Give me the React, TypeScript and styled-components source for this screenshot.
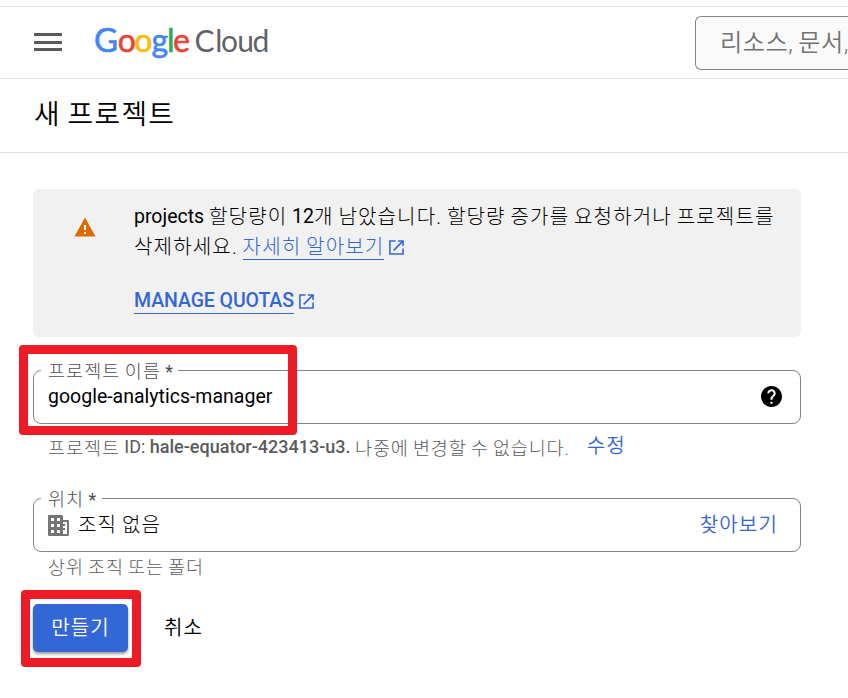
import React from "react";
import styled, { createGlobalStyle } from "styled-components";

const GlobalStyle = createGlobalStyle`
  *, *::before, *::after { box-sizing: border-box; }
  html, body { margin: 0; padding: 0; background: #fff; overflow: hidden; }
  body { font-family: Roboto, "Noto Sans CJK KR", sans-serif; color: #000; }
`;

const Ko = styled.span<{ $weight?: number; $track?: number }>`
  font-weight: ${(p) => p.$weight ?? 300};
  font-size: 1.03em;
  letter-spacing: ${(p) => p.$track ?? 0.055}em;
  word-spacing: -0.06em;
`;

const Page = styled.div`
  width: 848px;
  height: 698px;
  padding-top: 6px;
  display: flex;
  flex-direction: column;
  overflow: hidden;
`;

const TopBar = styled.header`
  height: 73px;
  flex: none;
  display: flex;
  align-items: center;
  padding-left: 34px;
  border-top: 1px solid #dfe0e1;
  border-bottom: 1px solid #dfe0e1;
`;

const MenuButton = styled.button`
  flex: none;
  width: 28px;
  height: 18px;
  margin-top: -1px;
  padding: 0;
  border: 0;
  background: none;
  display: flex;
  flex-direction: column;
  justify-content: space-between;
`;

const MenuLine = styled.span`
  width: 28px;
  height: 3px;
  background: #5a5b5d;
`;

const Logo = styled.svg`
  flex: none;
  width: 180px;
  height: 50px;
  margin-left: 32px;
  font-family: Lato, sans-serif;
`;

const Search = styled.div`
  flex: none;
  width: 174px;
  height: 54px;
  margin-left: 421px;
  padding: 0 0 5px 24px;
  display: flex;
  align-items: center;
  border: 1px solid #80868b;
  border-right: 0;
  border-radius: 6px 0 0 6px;
  background: #fafafa;
  color: #737373;
  font-size: 23.5px;
  white-space: nowrap;
`;

const TitleBar = styled.div`
  height: 74px;
  flex: none;
  padding: 0 34px 1px;
  display: flex;
  align-items: center;
  border-bottom: 1px solid #dfe0e1;
`;

const Title = styled.h1`
  margin: 0;
  font-size: 27px;
  font-weight: 400;
  line-height: 36px;
  white-space: nowrap;
`;

const Form = styled.main`
  width: 768px;
  margin: 36px 0 0 33px;
  display: flex;
  flex-direction: column;
`;

const Notice = styled.section`
  height: 148px;
  display: flex;
  padding: 13px 0 0 41px;
  border-radius: 6px;
  background: #f1f1f1;
`;

const WarningIcon = styled.svg`
  flex: none;
  width: 22px;
  height: 20px;
  margin: 15px 38px 0 0;
`;

const NoticeText = styled.div`
  font-size: 19.5px;
  line-height: 30px;
  white-space: nowrap;
`;

const Line = styled.div<{ $gap?: number }>`
  height: 30px;
  margin-top: ${(p) => p.$gap ?? 0}px;
  display: flex;
  align-items: center;
  white-space: pre;
`;

const Link = styled.a<{ $bold?: boolean }>`
  height: 25px;
  line-height: 24px;
  margin-right: 5px;
  color: #3367d6;
  border-bottom: 1px solid #3367d6;
  font-weight: ${(p) => (p.$bold ? 500 : 400)};
  letter-spacing: ${(p) => (p.$bold ? -0.08 : 0)}px;
`;

const Field = styled.div<{ $right?: number }>`
  position: relative;
  height: 54px;
  display: flex;
  align-items: center;
  justify-content: space-between;
  padding: 0 ${(p) => p.$right ?? 18}px 0 14px;
  border: 1px solid #80868b;
  border-radius: 8px;
`;

const FieldLabel = styled.label<{ $width: number }>`
  position: absolute;
  left: 7px;
  top: -12px;
  width: ${(p) => p.$width}px;
  height: 24px;
  padding-left: 7px;
  line-height: 25px;
  font-size: 18px;
  color: #4d4e50;
  background: #fff;
  white-space: nowrap;
`;

const Value = styled.div`
  display: flex;
  align-items: center;
  gap: 9px;
  font-size: 19.5px;
  line-height: 28px;
`;

const Hint = styled.div<{ $top?: number }>`
  height: 30px;
  margin-top: ${(p) => p.$top ?? 0}px;
  padding-left: 15px;
  display: flex;
  align-items: center;
  font-size: 18px;
  color: #5a5b5d;
  white-space: pre;

  b { font-weight: 500; }
`;

const TextButton = styled.button<{ $color: string; $left?: number }>`
  padding: 0;
  margin-left: ${(p) => p.$left ?? 0}px;
  border: 0;
  background: none;
  font-family: inherit;
  font-size: 19.5px;
  line-height: 28px;
  color: ${(p) => p.$color};
`;

const Spacer = styled.div<{ $h: number }>`
  flex: none;
  height: ${(p) => p.$h}px;
`;

const Actions = styled.div`
  display: flex;
  align-items: center;
  height: 48px;
`;

const CreateButton = styled.button`
  width: 95px;
  height: 48px;
  padding: 0 0 3px;
  border: 0;
  border-radius: 5px;
  background: #3367d6;
  color: #fff;
  font-family: inherit;
  font-size: 19.5px;
  box-shadow: 0 2px 3px rgba(0, 0, 0, 0.4);
`;

const Highlight = styled.div<{ $x: number; $y: number; $w: number; $h: number }>`
  position: absolute;
  left: ${(p) => p.$x}px;
  top: ${(p) => p.$y}px;
  width: ${(p) => p.$w}px;
  height: ${(p) => p.$h}px;
  border: 9px solid #ed1c24;
  border-radius: 4px;
  pointer-events: none;
`;

const OpenIconSvg = styled.svg`
  width: 15px;
  height: 15px;
  margin-top: 1px;
`;

const OpenIcon = () => (
  <OpenIconSvg viewBox="0 0 16 16" fill="none" stroke="#3367d6" strokeWidth="1.7">
    <path d="M7 1H1v14h14V9M9.5 1H15v5.5M15 1L5 11" />
  </OpenIconSvg>
);

const HelpSvg = styled.svg`
  width: 21px;
  height: 21px;
  margin-bottom: 1px;
`;

const HelpIcon = () => (
  <HelpSvg viewBox="2 2 20 20" fill="#000">
    <path d="M12 2C6.48 2 2 6.48 2 12s4.48 10 10 10 10-4.48 10-10S17.52 2 12 2zm1 17h-2v-2h2v2zm2.07-7.75l-.9.92C13.45 12.9 13 13.5 13 15h-2v-.5c0-1.1.45-2.1 1.17-2.83l1.24-1.26c.37-.36.59-.86.59-1.41 0-1.1-.9-2-2-2s-2 .9-2 2H8c0-2.21 1.79-4 4-4s4 1.79 4 4c0 .88-.36 1.68-.93 2.25z" />
  </HelpSvg>
);

const BuildingIcon = () => (
  <svg width="21" height="21" viewBox="0 0 21 21">
    <path fill="#757575" fillRule="evenodd" d="M1 0h13q1 0 1 1v4h5q1 0 1 1v14q0 1-1 1H1q-1 0-1-1V1q0-1 1-1zM3 3v3h3V3zM9 3v3h3V3zM3 9v3h3V9zM9 9v3h3V9zM3 15v3h3v-3zM9 15v3h3v-3zM15 7v2h2v2h-2v2h2v2h-2v4h4V7z" />
  </svg>
);

const logoLetters = [
  { t: "G", x: 0, c: "#4285f4", s: 33 },
  { t: "o", x: 23.8, c: "#ea4335", s: 32 },
  { t: "o", x: 40.3, c: "#fbbc04", s: 32 },
  { t: "g", x: 57.4, c: "#4285f4", s: 32 },
  { t: "l", x: 73, c: "#34a853", s: 32 },
  { t: "e", x: 79, c: "#ea4335", s: 32 },
];

export default function App() {
  return (
    <>
      <GlobalStyle />
      <Page>
        <TopBar>
          <MenuButton aria-label="메뉴">
            <MenuLine />
            <MenuLine />
            <MenuLine />
          </MenuButton>
          <Logo viewBox="0 0 180 50">
            {logoLetters.map((l) => (
              <text key={l.x} x={l.x} y="34.3" fontSize={l.s} fill={l.c} stroke={l.c} strokeWidth="0.6">
                {l.t}
              </text>
            ))}
            <text x="100.5 121.3 127 143.3 158.5" y="34.3" fontSize="30" fill="#5f6368">
              Cloud
            </text>
          </Logo>
          <Search>
            <Ko $weight={350} $track={0.02}>리소스, 문서,</Ko>
          </Search>
        </TopBar>
        <TitleBar>
          <Title>
            <Ko $weight={350} $track={0.05}>새 프로젝트</Ko>
          </Title>
        </TitleBar>
        <Form>
          <Notice>
            <WarningIcon viewBox="0 0 22 20">
              <path fill="#dd6b00" d="M11 .5L21.5 19.5H.5z" />
              <path fill="#f1f1f1" d="M10 8h2v5h-2zM10 15h2v2h-2z" />
            </WarningIcon>
            <NoticeText>
              <Line>
                {"projects "}
                <Ko>할당량이 </Ko>
                12
                <Ko>개 남았습니다. 할당량 증가를 요청하거나 프로젝트를</Ko>
              </Line>
              <Line>
                <Ko>삭제하세요. </Ko>
                <Link>
                  <Ko>자세히 알아보기</Ko>
                </Link>
                <OpenIcon />
              </Line>
              <Line $gap={24}>
                <Link $bold>MANAGE QUOTAS</Link>
                <OpenIcon />
              </Line>
            </NoticeText>
          </Notice>
          <Spacer $h={33} />
          <Field>
            <FieldLabel $width={137}>
              <Ko>프로젝트 이름</Ko> *
            </FieldLabel>
            <Value>google-analytics-manager</Value>
            <HelpIcon />
          </Field>
          <Hint $top={7}>
            <Ko $track={0.05}>프로젝트 </Ko>
            {"ID: "}
            <b>hale-equator-423413-u3. </b>
            <Ko $track={0.045}>나중에 변경할 수 없습니다.</Ko>
            <TextButton $color="#3367d6" $left={17}>
              <Ko $weight={350}>수정</Ko>
            </TextButton>
          </Hint>
          <Spacer $h={37} />
          <Field $right={22}>
            <FieldLabel $width={61}>
              <Ko>위치</Ko> *
            </FieldLabel>
            <Value>
              <BuildingIcon />
              <Ko>조직 없음</Ko>
            </Value>
            <TextButton $color="#3367d6">
              <Ko $weight={350}>찾아보기</Ko>
            </TextButton>
          </Field>
          <Hint $top={-2}>
            <Ko $track={0.045}>상위 조직 또는 폴더</Ko>
          </Hint>
          <Spacer $h={24} />
          <Actions>
            <CreateButton>
              <Ko $weight={350}>만들기</Ko>
            </CreateButton>
            <TextButton $color="#000" $left={36}>
              <Ko $weight={350}>취소</Ko>
            </TextButton>
          </Actions>
        </Form>
        <Highlight $x={19} $y={345} $w={278} $h={90} />
        <Highlight $x={21} $y={590} $w={120} $h={77} />
      </Page>
    </>
  );
}
